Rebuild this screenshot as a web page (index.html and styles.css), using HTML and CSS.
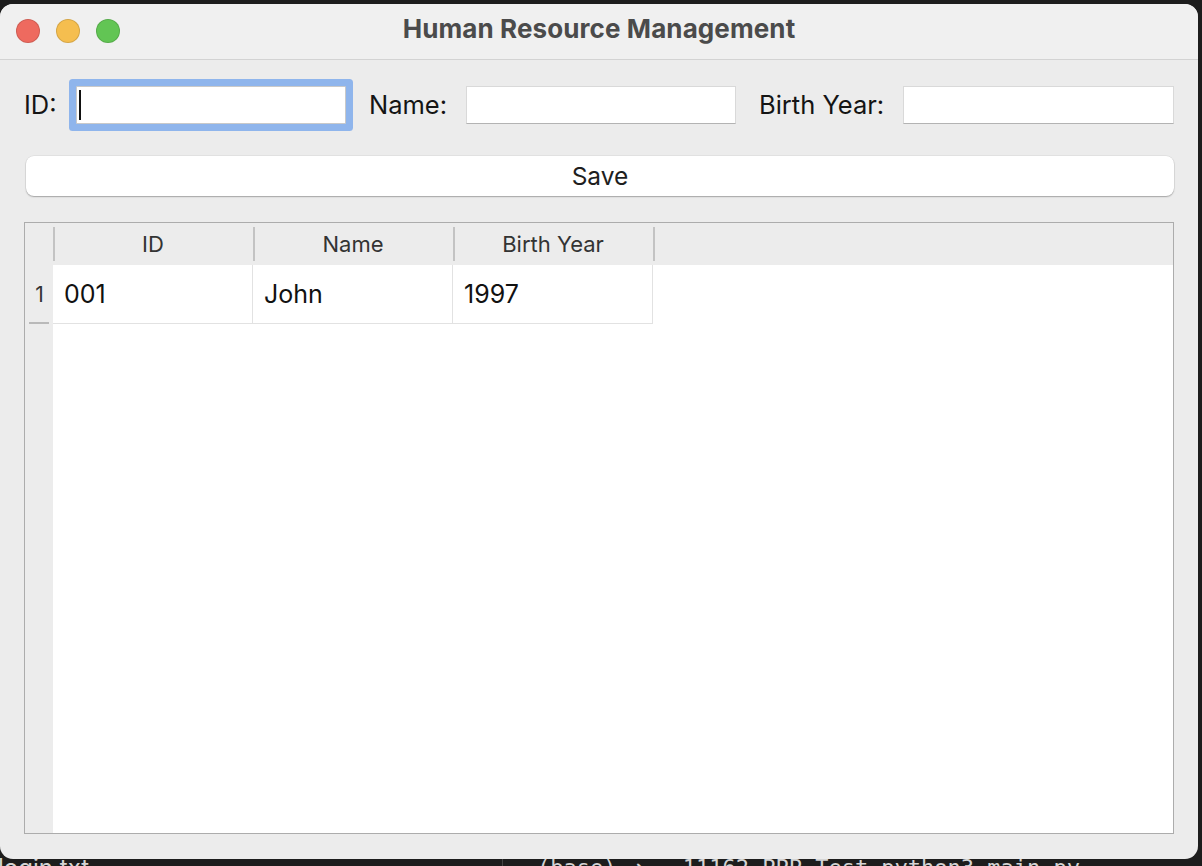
FILE: index.html
```html
<!DOCTYPE html>
<html>
<head>
<meta charset="utf-8">
<title>Human Resource Management</title>
<link rel="stylesheet" href="styles.css">
</head>
<body>
<div class="window">
  <div class="titlebar">
    <div class="lights">
      <span class="light red"></span>
      <span class="light yellow"></span>
      <span class="light green"></span>
    </div>
    <div class="title">Human Resource Management</div>
    <div class="spacer"></div>
  </div>
  <div class="content">
    <div class="form">
      <div class="group">
        <span class="label label-id">ID:</span>
        <div class="field focused"><span class="caret"></span></div>
      </div>
      <div class="group">
        <span class="label label-name">Name:</span>
        <div class="field"></div>
      </div>
      <div class="group">
        <span class="label label-year">Birth Year:</span>
        <div class="field field-wide"></div>
      </div>
    </div>
    <div class="save">Save</div>
    <div class="table">
      <div class="corner"></div>
      <div class="th">ID</div>
      <div class="th">Name</div>
      <div class="th">Birth Year</div>
      <div class="th th-fill"></div>
      <div class="rh">1</div>
      <div class="td">001</div>
      <div class="td">John</div>
      <div class="td">1997</div>
      <div class="td-fill"></div>
      <div class="rh-rest"></div>
      <div class="empty"></div>
    </div>
  </div>
</div>
<div class="desk">
  <span class="desk-file">login.txt</span>
  <span class="desk-term">(base) ➜  ~ 11162  PPP  Test  python3 main.py</span>
</div>
</body>
</html>
```
FILE: styles.css
```css
* { box-sizing: border-box; }
html, body {
  margin: 0;
  padding: 0;
}
body {
  background: #1d1d1d;
  width: 1202px;
  height: 866px;
  overflow: hidden;
  font-family: "Inter", "Liberation Sans", sans-serif;
  color: #1a1a1a;
}
.window {
  position: relative;
  z-index: 1;
  width: 1198px;
  height: 855px;
  margin-top: 4px;
  background: #ececec;
  border-radius: 13px;
  overflow: hidden;
  display: flex;
  flex-direction: column;
}
.titlebar {
  height: 56px;
  flex: none;
  background: #f0f0f0;
  border-bottom: 1px solid #d3d3d3;
  display: grid;
  grid-template-columns: 1fr auto 1fr;
  align-items: center;
}
.lights {
  display: flex;
  gap: 16px;
  padding-left: 16px;
  padding-bottom: 1px;
}
.light {
  width: 24px;
  height: 24px;
  border-radius: 50%;
  border: 1px solid rgba(0,0,0,0.13);
}
.red { background: #ee6a5f; }
.yellow { background: #f5be4f; }
.green { background: #62c554; }
.title {
  font-weight: 700;
  font-size: 26px;
  color: #4b4b4b;
  padding-bottom: 7px;
  letter-spacing: 0.1px;
}
.content {
  flex: 1;
  display: flex;
  flex-direction: column;
  padding: 26px 24px 25px 24px;
}
.form {
  display: flex;
  align-items: center;
  gap: 23px;
  height: 38px;
}
.group {
  display: flex;
  align-items: center;
}
.label {
  font-size: 25.5px;
  color: #141414;
  padding-bottom: 2px;
}
.label-id { width: 52px; }
.label-name { width: 97px; }
.label-year { width: 144px; }
.field {
  width: 270px;
  height: 38px;
  background: #fff;
  border: 1px solid #d9d9d9;
  border-bottom-color: #b3b3b3;
  display: flex;
  align-items: center;
}
.field-wide { width: 271px; }
.field.focused {
  border-color: #c9c9c9;
  border-radius: 1px;
  box-shadow: 0 0 0 7px #8fb5ec;
}
.caret {
  width: 2px;
  height: 30px;
  background: #111;
  margin-left: 2px;
}
.save {
  margin: 32px 0 0 2px;
  height: 40px;
  background: #fff;
  border-radius: 8px;
  box-shadow: 0 1px 1.5px rgba(0,0,0,0.28), 0 0 0 0.5px rgba(0,0,0,0.08);
  display: flex;
  align-items: center;
  justify-content: center;
  font-size: 24.5px;
  color: #1e1e1e;
  padding-bottom: 1px;
}
.table {
  margin-top: 26px;
  height: 612px;
  border: 1px solid #acacac;
  display: grid;
  grid-template-columns: 28px 200px 200px 200px 1fr;
  grid-template-rows: 42px 59px 1fr;
  background: #fff;
}
.corner { background: #ececec; }
.th {
  background: linear-gradient(#c3c3c3, #c3c3c3) left center / 2px 34px no-repeat, #ececec;
  display: flex;
  align-items: center;
  justify-content: center;
  font-size: 22px;
  color: #333;
}
.th-fill { background: linear-gradient(#c3c3c3, #c3c3c3) left center / 2px 34px no-repeat, #ececec; }
.rh {
  background: linear-gradient(#b9b9b9, #b9b9b9) center bottom 0 / 20px 2px no-repeat, #ececec;
  display: flex;
  align-items: center;
  justify-content: center;
  font-size: 21px;
  color: #333;
  padding-left: 1px;
}
.td {
  background: #fff;
  border-right: 1px solid #e2e2e2;
  border-bottom: 1px solid #e2e2e2;
  display: flex;
  align-items: center;
  padding-left: 11px;
  font-size: 25px;
  color: #111;
}
.td-fill { background: #fff; }
.rh-rest { background: #ececec; }
.empty {
  grid-column: 2 / 6;
  background: #fff;
}
.desk {
  display: flex;
  align-items: flex-start;
  margin-top: -6px;
  height: 40px;
  color: #d4d4d4;
}
.desk-file {
  font-size: 24px;
  margin-left: -2px;
  width: 505px;
  border-right: 1px solid #444;
  line-height: 30px;
}
.desk-term {
  font-family: "DejaVu Sans Mono", monospace;
  font-size: 22px;
  line-height: 30px;
  padding-left: 34px;
}
```
